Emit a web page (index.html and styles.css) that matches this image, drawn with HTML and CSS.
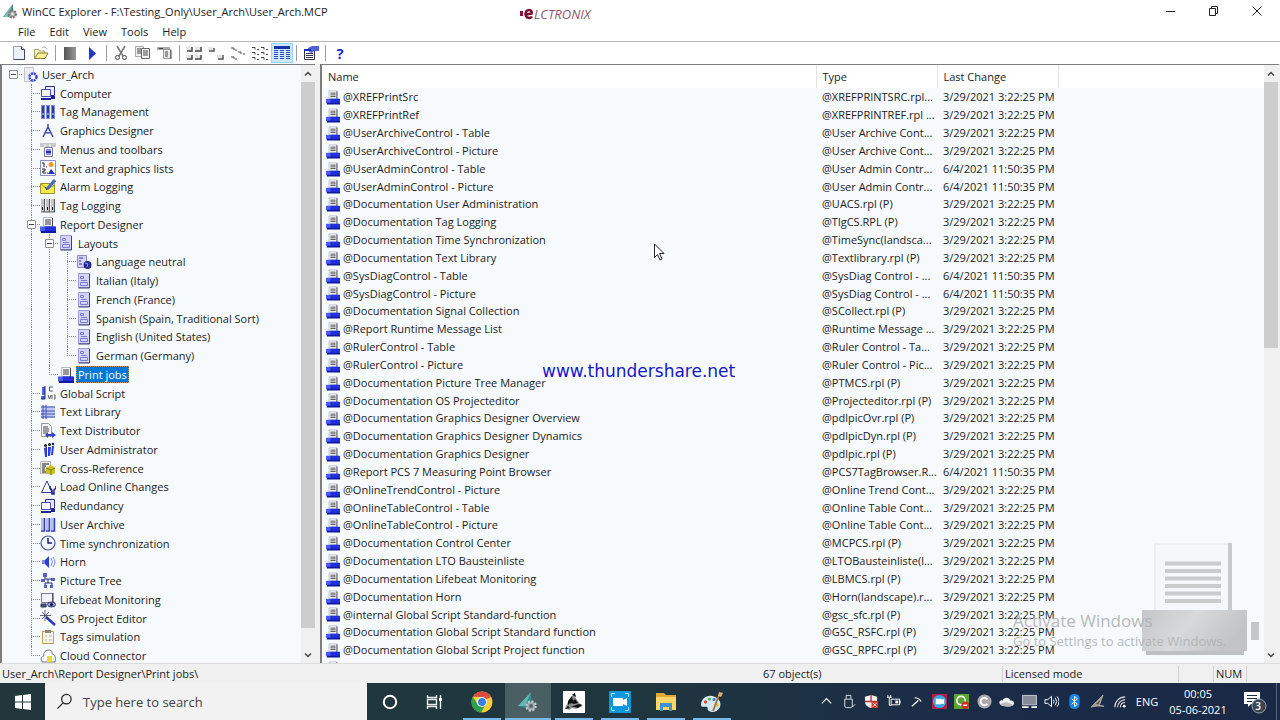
FILE: index.html
```html
<!DOCTYPE html>
<html lang="en">
<head>
<meta charset="utf-8">
<title>WinCC Explorer</title>
<link rel="stylesheet" href="styles.css">
</head>
<body>
<div class="app">
  <header class="titlebar">
    <svg class="icon" viewBox="0 0 16 16"><path d="M1 14 11 1v9l-4 4z" fill="#3f8f92"/><path d="M1 14 10 2 6 14z" fill="#78b9ba"/><circle cx="10.500" cy="11" r="3.500" fill="#a9a9a9" stroke="#777" stroke-width="2" stroke-dasharray="2 1"/><circle cx="10.500" cy="11" r="1.200" fill="#eee"/></svg>
    <h1 class="title">WinCC Explorer - F:\Testing_Only\User_Arch\User_Arch.MCP</h1>
    <div class="window-buttons">
      <button aria-label="Minimize"><svg viewBox="0 0 12 12"><path d="M1 6.500h9" stroke="#222" fill="none"/></svg></button>
      <button aria-label="Restore"><svg viewBox="0 0 12 12"><path d="M1.500 3.500h6v7h-6zM3.500 3.500v-2h6v7h-2" stroke="#222" fill="none"/></svg></button>
      <button aria-label="Close"><svg viewBox="0 0 12 12"><path d="M1.500 1.500l9 9M10.500 1.500l-9 9" stroke="#222" fill="none"/></svg></button>
    </div>
  </header>
  <div class="brand"><svg viewBox="0 0 14 14"><path d="M0 4h3v5H0z" fill="#8a1538"/><path d="M12 9.500c-1 2-5 2-6-.500-1-3 0-6 3-6 2.500 0 3 2 2.500 3.500L6 7.500" stroke="#7a1030" stroke-width="2.600" fill="none"/></svg><span>LCTRONIX</span></div>
  <nav class="menubar">
    <button>File</button><button>Edit</button><button>View</button><button>Tools</button><button>Help</button>
  </nav>
  <div class="toolbar" role="toolbar">
    <button aria-label="New"><svg class="icon" viewBox="0 0 16 16"><path d="M2.500 1.500h8l3 3v10h-11z" fill="#eef0fa" stroke="#9aa0b4"/><path d="M10.500 1.500v3h3v10h-11" fill="none" stroke="#3c4470"/></svg></button>
    <button aria-label="Open"><svg class="icon" viewBox="0 0 16 16"><path d="M1.500 13V4.500h4l1 1.500h5v2" fill="#fffbd0" stroke="#a8a060"/><path d="M1.500 13.500 5 8h10l-3 5.500z" fill="#f6ef9a" stroke="#857f3a"/><path d="M9 3c2-2 4-1 5 1" fill="none" stroke="#999"/></svg></button>
    <span class="rule"></span>
    <button aria-label="Stop"><svg class="icon" viewBox="0 0 16 16"><defs><linearGradient id="stop"><stop stop-color="#555"/><stop offset="1" stop-color="#999"/></linearGradient></defs><path d="M2 2h12v13H2z" fill="url(#stop)"/></svg></button>
    <button aria-label="Activate"><svg class="icon" viewBox="0 0 16 16"><path d="M5 2l7 6.500L5 15z" fill="#2136d8"/></svg></button>
    <span class="rule"></span>
    <button aria-label="Cut"><svg class="icon" viewBox="0 0 16 16"><path d="M4 1l6 10M12 1 6 11" stroke="#777" stroke-width="1.500"/><circle cx="4.500" cy="12.500" r="2" fill="none" stroke="#444"/><circle cx="11.500" cy="12.500" r="2" fill="none" stroke="#444"/></svg></button>
    <button aria-label="Copy"><svg class="icon" viewBox="0 0 16 16"><path d="M.5 1.500h8v10h-8z" fill="#eee" stroke="#aaa"/><path d="M6.500 3.500h8v10h-8z" fill="#f4f4f4" stroke="#666"/><path d="M2 4h4M2 6h4M2 8h4M8 6h5M8 8h5M8 10h5" stroke="#444"/></svg></button>
    <button aria-label="Paste"><svg class="icon" viewBox="0 0 16 16"><path d="M0 2h13v3H0z" fill="#aaa"/><path d="M6.500 4.500h7v9h-7z" fill="#eee" stroke="#999"/><path d="M2 3.500h4M8 7h3M8 9h3M8 11h3M14 5v9" stroke="#444"/></svg></button>
    <span class="rule"></span>
    <button aria-label="Large icons"><svg class="icon" viewBox="0 0 16 16"><path d="M1 6h5V2M9 6h6V2M1 14h5v-4M9 14h6v-4" fill="none" stroke="#444" stroke-width="1.500"/><path d="M0 2h5v3H0zM9 2h5v3H9zM0 10h5v3H0zM9 10h5v3H9z" fill="#e4e4e4"/></svg></button>
    <button aria-label="Small icons"><svg class="icon" viewBox="0 0 16 16"><path d="M1 6h5V3M10 14h5v-4" fill="none" stroke="#555" stroke-width="1.500"/><path d="M0 2h5v3H0zM9 10h5v3H9z" fill="#e4e4e4"/></svg></button>
    <button aria-label="Tiles"><svg class="icon" viewBox="0 0 16 16"><path d="M1 3h3v2M1 12h3v2M8 7h3v2M5 5h2M5 14h2M13 9h2" fill="none" stroke="#444"/></svg></button>
    <button aria-label="List"><svg class="icon" viewBox="0 0 16 16"><path d="M0 2.500h3v2M0 7.500h3v2M0 12.500h3v2M9 2.500h3v2M9 7.500h3v2M9 12.500h3v2M5 4.500h2M5 9.500h2M5 14.500h2M14 4.500h2M14 9.500h2M14 14.500h2" fill="none" stroke="#444"/></svg></button>
    <button aria-label="Details" class="pressed"><svg class="icon" viewBox="0 0 16 16"><path d="M0 1h16v3H0z" fill="#1731ad"/><path d="M0 5.500h4M0 7.500h4M0 9.500h4M0 11.500h4M0 13.500h4M6 5.500h4M6 7.500h4M6 9.500h4M6 11.500h4M6 13.500h4M12 5.500h4M12 7.500h4M12 9.500h4M12 11.500h4M12 13.500h4" stroke="#2f49c0"/></svg></button>
    <span class="rule"></span>
    <button aria-label="Properties"><svg class="icon" viewBox="0 0 16 16"><path d="M1.500 5.500h10v9h-10z" fill="#fff" stroke="#335"/><path d="M3 8.500h7M3 10.500h7M3 12.500h7" stroke="#335"/><path d="M5 3l4-2h7v5h-5l-2 2-3-1z" fill="#5261d8"/><path d="M1 5h7" stroke="#1731ad" stroke-width="2"/></svg></button>
    <span class="rule"></span>
    <button aria-label="Help" class="help">?</button>
  </div>
  <main class="panes">
    <section class="tree-pane" aria-label="Project tree">
      <ul class="tree" id="tree"></ul>
      <div class="scrollbar"><svg class="arrow" viewBox="0 0 14 14"><path d="M4 9l3-3 3 3" /></svg><div class="thumb long"></div><svg class="arrow" viewBox="0 0 14 14"><path d="M4 6l3 3 3-3"/></svg></div>
    </section>
    <section class="list-pane" aria-label="Print jobs">
      <div class="list">
        <table>
          <colgroup><col class="c-name"><col class="c-type"><col class="c-date"><col></colgroup>
          <thead><tr><th>Name</th><th>Type</th><th>Last Change</th><th></th></tr></thead>
          <tbody id="rows"></tbody>
        </table>
        <svg class="printer-mark" viewBox="0 0 118 114">
          <defs><linearGradient id="pm" x2="1" y2=".3"><stop stop-color="#bfc1c2"/><stop offset=".5" stop-color="#d4d6d7"/><stop offset="1" stop-color="#bcbebf"/></linearGradient></defs>
          <path d="M13 0h78v72H13z" fill="#edf0f2"/><path d="M87 0h4v70h-4z" fill="#c4c7c8"/><path d="M15 2h72v68H15z" fill="#f5f8fa"/>
          <path d="M24 20.500h56M24 28h56M24 35.500h56M24 43h56M24 50.500h56M24 58h56" stroke="#c5c8c9" stroke-width="4"/>
          <path d="M1 67h105v41H1z" fill="url(#pm)"/><path d="M5 108h98v4H5z" fill="#b9bbbc"/><path d="M110 79h8v18h-8z" fill="#bfc1c2"/>
        </svg>
      </div>
      <div class="scrollbar"><svg class="arrow" viewBox="0 0 14 14"><path d="M4 9l3-3 3 3"/></svg><div class="thumb short"></div><svg class="arrow end" viewBox="0 0 14 14"><path d="M4 6l3 3 3-3"/></svg></div>
    </section>
  </main>
  <footer class="status">
    <span class="s-path">User_Arch\Report Designer\Print jobs\</span>
    <span class="s-count">67 object(s)</span>
    <span class="s-mode">Licensed mode</span>
    <span class="s-blank"></span>
    <span class="s-num">NUM</span>
    <span class="s-end"></span>
  </footer>
  <div class="taskbar">
    <button class="start" aria-label="Start"><svg viewBox="0 0 16 16"><path d="M0 2l7-1v6.500H0zM8 1l8-1v7.500H8zM0 8.500h7V15l-7-1zM8 8.500h8V16l-8-1z" fill="#fff"/></svg></button>
    <label class="search"><svg viewBox="0 0 18 18"><circle cx="11" cy="6.500" r="5" fill="none" stroke="#222" stroke-width="1.300"/><path d="M7.500 10.500 1.500 16.500" stroke="#222" stroke-width="1.300"/></svg><input type="text" aria-label="Search" placeholder="Type here to search"></label>
    <div class="tasks">
      <button aria-label="Cortana"><svg viewBox="0 0 22 22"><circle cx="11" cy="11" r="6.200" fill="none" stroke="#fff" stroke-width="2"/></svg></button>
      <button aria-label="Task view"><svg viewBox="0 0 22 22"><path d="M2.500 4v2.500h9V4M2.500 18v-2.500h9V18M2.500 8.500h9v5h-9zM15.500 4v14" fill="none" stroke="#e8eef0" stroke-width="1.400"/><path d="M14 7h3v3h-3z" fill="#fff"/></svg></button>
      <button aria-label="Chrome" class="running"><svg viewBox="0 0 22 22"><circle cx="11" cy="11" r="10.500" fill="#f9cf33"/><path d="M1.900 5.700A10.500 10.500 0 0 1 20.100 5.700L11 6z" fill="#dd4b3e"/><path d="M1.900 5.700A10.500 10.500 0 0 0 10 21.500l5-8.500-8 1z" fill="#2fa04e"/><path d="M20.100 5.700H11v5z" fill="#dd4b3e"/><circle cx="11" cy="11" r="5" fill="#fff"/><circle cx="11" cy="11" r="4" fill="#3d7fe0"/></svg></button>
      <button aria-label="WinCC Explorer" class="running current"><svg viewBox="0 0 22 22"><path d="M1 15 14 1v12l-5 4z" fill="#2f8f8d"/><path d="M1 15 14 1 8 15z" fill="#6bb5b0"/><circle cx="14" cy="15" r="4.500" fill="#9ba3a6" stroke="#bfc6c8" stroke-width="2.500" stroke-dasharray="2 1.500"/><circle cx="14" cy="15" r="2" fill="#5c6a6e"/></svg></button>
      <button aria-label="Sketch" class="running"><svg viewBox="0 0 22 22"><rect width="22" height="22" fill="#fff"/><path d="M2 17l3-6 3-5 3-2 3 5 3 4 3 1-2 2-5 2-4-1-3 2z" fill="#8d8d8d"/><path d="M2 18l3-3 2 2zM5 10l4-5 1 5 2-2 3 4-4 1-3-1-3 2zM8 16l5-2 3-1 3 1-4 3-3-1zM9 4l3-2 1 4z" fill="#111"/></svg></button>
      <button aria-label="Recorder" class="running"><svg viewBox="0 0 22 22"><rect width="22" height="22" rx="1" fill="#0e97dc"/><path d="M2.500 6V2.500H6M16 2.500h3.500V6M2.500 16v3.500H6M16 19.500h3.500V16" stroke="#a5dcf8" fill="none"/><path d="M4 7h10v2l4-2v8l-4-2v2H4z" fill="#fff"/></svg></button>
      <button aria-label="File Explorer" class="running"><svg viewBox="0 0 22 22"><path d="M1 2h8l2 2h10v15H1z" fill="#e5a82f"/><path d="M1 6h20v13H1z" fill="#fbd667"/><path d="M5 20v-8h12v8h-3v-4H8v4z" fill="#3d93cf"/></svg></button>
      <button aria-label="Paint" class="running"><svg viewBox="0 0 22 22"><path d="M0 14C0 8 5 4 11 5s10 6 8 11-8 6-11 4 0-3-2-4-6 1-6-2z" fill="#d3e8f2"/><circle cx="4.500" cy="11" r="1.700" fill="#e04b3a"/><circle cx="8.500" cy="8" r="1.600" fill="#4eb34a"/><circle cx="13" cy="8.500" r="1.500" fill="#3b76d0"/><circle cx="16" cy="14" r="1.700" fill="#e9b93b"/><path d="M12 20 18 4" stroke="#b27435" stroke-width="2"/><path d="M17 5l1-4 4 1-2 4z" fill="#e0b070"/></svg></button>
    </div>
    <div class="tray">
      <svg viewBox="0 0 16 16"><path d="M3 10l5-5 5 5" stroke="#fff" stroke-width="1.300" fill="none"/></svg>
      <svg viewBox="0 0 16 16"><path d="M5.500 5V1.500h5V5M4 5.500h8V13q0 1.500-2 1.500H6q-2 0-2-1.500zM12 14l3-3" stroke="#e8e8e8" fill="none"/></svg>
      <svg viewBox="0 0 16 16"><path d="M7.500 1 14 3v5c0 4-3 6-6.500 7C4 14 1 12 1 8V3z" fill="#f2f2f2"/><path d="M7.500 1v7H1M7.500 8H14" stroke="#b33" stroke-width="1.500" fill="none"/><path d="M8 8h7v7H8z" fill="#d8362d"/><path d="M9.500 9.500l4 4M13.500 9.500l-4 4" stroke="#fff"/></svg>
      <svg viewBox="0 0 16 16"><path d="M5.500 5.500h9v6h-9zM15 7v3M1 3.500h5M2 1v3M5 1v3M3.500 4v8H6" stroke="#fff" fill="none"/><path d="M10 7h3v3h-3z" fill="#fff"/></svg>
      <svg viewBox="0 0 16 16"><path d="M3 13l7-6M6 4c2 0 5 1 7 4" stroke="#fff" stroke-width="1.300" fill="none"/></svg>
      <svg viewBox="0 0 16 16"><path d="M0 0h16v16H0z" fill="#b31d45"/><circle cx="8" cy="8" r="7" fill="#3aa4e0"/><path d="M4 5h6v1l3-1v6l-3-1v1H4z" fill="#fff"/></svg>
      <svg viewBox="0 0 16 16"><path d="M0 0h16v16H0z" fill="#5aa52f"/><circle cx="7.500" cy="7" r="4.500" fill="none" stroke="#fff" stroke-width="1.800"/><circle cx="12" cy="12" r="4" fill="#d32d27"/><path d="M10 12h4" stroke="#fff" stroke-width="1.500"/></svg>
      <svg viewBox="0 0 16 16"><circle cx="8" cy="8" r="7.500" fill="#aaa9ac"/><path d="M11 5.500a4 4 0 1 0 0 5" fill="none" stroke="#fff" stroke-width="2"/></svg>
      <svg viewBox="0 0 16 16"><path d="M1 11c-2-3 1-5 3-4 1-4 7-4 8 0 4-1 5 3 3 5-3 2-11 2-14-1z" fill="#f2f2f2"/><path d="M1 11c3-2 8-4 14 1-3 2-11 2-14-1z" fill="#bbb"/></svg>
      <svg viewBox="0 0 16 16"><path d="M.5 1.500h15v10H.5z" fill="#868b95" stroke="#c9ccd2"/><path d="M0 14h7M10 14h6" stroke="#fff" stroke-width="2"/></svg>
      <svg viewBox="0 0 16 16"><path d="M1 6h3l4-3.500v11L4 10H1zM10 6q1.500 2 0 4M12 4q3 4 0 8M14 2.500q4 5.500 0 11" stroke="#fff" fill="none"/></svg>
      <svg viewBox="0 0 16 16"><rect x="2.500" width="11" height="16" rx="5" fill="#1485e0"/><path d="M5 5l6 6-3 2.500v-11L11 5l-6 6" stroke="#fff" fill="none"/></svg>
      <svg viewBox="0 0 16 16"><path d="M1 14 14 1 10 12q4 1 5 1-8-1-14 1z" fill="#a5a29a" stroke="#a5a29a"/><path d="M6 11 11 6 9 11z" fill="#4b4f54"/></svg>
      <svg viewBox="0 0 16 16"><path d="M3 14C3 8 8 3 14 3M6 14c0-4 4-8 8-8M9 14c0-3 2-5 5-5" stroke="#ddd" fill="none" stroke-width="1.200"/><circle cx="13" cy="13" r="1.500" fill="#fff"/></svg>
    </div>
    <span class="lang">ENG</span>
    <div class="clock"><span>00:05</span><span>05-06-2021</span></div>
    <button class="notify" aria-label="Notifications"><svg viewBox="0 0 24 24"><path d="M1 2h16v12H8l-3 3v-3H1z" fill="#fff"/><path d="M4 5.500h10M4 8.500h10M4 11.500h5" stroke="#1c2d45"/><circle cx="16" cy="16" r="7" fill="#3b4552" stroke="#9aa2ad"/></svg><span class="badge">3</span></button>
  </div>
  <svg class="cursor" viewBox="0 0 12 18"><path d="M1.500 1v13.500l3-3 2.500 5.500 2-1-2.500-5.500H11z" fill="#fff" stroke="#222"/></svg>
  <div class="site-mark">www.thundershare.net</div>
  <div class="activate"><strong>Activate Windows</strong><span>Go to Settings to activate Windows.</span></div>
</div>
<script src="app.js"></script>
</body>
</html>
```
FILE: styles.css
```css
* { box-sizing: border-box; }
body { margin: 0; font-family: "Open Sans", "Noto Sans", sans-serif; font-size: 11px; color: #1c1c1c; overflow: hidden; }
button { border: 0; padding: 0; background: none; font: inherit; color: inherit; display: flex; align-items: center; justify-content: center; }
svg { display: block; flex: none; }
.icon { width: 16px; height: 16px; }
.app { position: relative; display: flex; flex-direction: column; height: 100vh; background: #fff; }

.titlebar { display: flex; align-items: center; height: 22px; padding: 0 2px; gap: 4px; }
.title { flex: 1; margin: 0; font-size: 11px; font-weight: 400; }
.window-buttons { display: flex; }
.window-buttons button { width: 43px; height: 20px; }
.window-buttons svg { width: 12px; height: 12px; }
.brand { position: absolute; left: 520px; top: 5px; display: flex; align-items: center; color: #8a5a6c; font: italic 13px/18px "Liberation Sans Narrow", "Open Sans", sans-serif; }
.brand svg { width: 14px; height: 14px; }

.menubar { display: flex; height: 20px; padding-left: 11px; border-bottom: 1px solid #b8b8b8; }
.menubar button { padding: 0 7px; }
.toolbar { display: flex; align-items: center; height: 22px; padding-left: 8px; }
.toolbar button { width: 22px; height: 20px; }
.toolbar .icon { width: 16px; height: 16px; }
.toolbar .rule { width: 1px; height: 16px; margin: 0 3px; background: #9c9c9c; }
.toolbar .pressed { background: #cce8ff; border: 1px solid #99d1ff; }
.toolbar .help { color: #1a30d0; font-size: 15px; font-weight: 700; }

.panes { flex: 1; min-height: 0; display: flex; gap: 5px; background: #f0f0f0; }
.tree-pane, .list-pane { display: flex; overflow: hidden; background: #f6fafc; border: 2px solid #7d7d7d; border-right: 0; border-bottom: 0; border-top-width: 1px; }
.tree-pane { width: 315px; }
.list-pane { flex: 1; min-width: 0; border-right: 2px solid #f0f0f0; }
.scrollbar { width: 14px; display: flex; flex-direction: column; background: #f0f0f0; }
.arrow { width: 14px; height: 17px; fill: none; stroke: #444; stroke-width: 1.500; }
.arrow.end { margin-top: auto; }
.thumb { background: #cdcdcd; }
.thumb.long { flex: 1; margin-bottom: 18px; }
.thumb.short { height: 266px; }

.tree { flex: 1; min-width: 0; margin: 0; padding: 0 0 0 2px; list-style: none; overflow: hidden; }
.tree li { display: flex; height: 19px; align-items: center; white-space: nowrap; }
.tree li:nth-child(4n + 2) { height: 18px; }
.slot { width: 18px; height: 100%; flex: none; position: relative; }
.slot.line::before, .slot.last::before { content: ""; position: absolute; left: 9px; top: 0; bottom: 0; border-left: 1px dotted #8c8c8c; }
.slot.last::before { bottom: 50%; }
.slot.elbow::after, .slot.last::after { content: ""; position: absolute; left: 9px; right: 0; top: 9px; border-top: 1px dotted #8c8c8c; }
.expander { position: absolute; z-index: 1; left: 5px; top: 5px; width: 9px; height: 9px; background: #fff; border: 1px solid #8f8f8f; border-radius: 1px; }
.expander::after { content: ""; width: 5px; height: 1px; background: #445; flex: none; }
.label { margin-left: 2px; padding: 0 2px; line-height: 17px; }
.label.selected { background: #0078d7; color: #fff; outline: 1px dotted #d08a3c; outline-offset: -1px; }

.list { flex: 1; min-width: 0; position: relative; overflow: hidden; }
table { width: 100%; table-layout: fixed; border-collapse: collapse; }
.c-name { width: 494px; }
.c-type, .c-date { width: 121px; }
th { height: 23px; padding: 0 6px 1px; background: #fff; border-right: 1px solid #e2e2e2; text-align: left; font-weight: 400; }
th:last-child { border-right: 0; }
td { height: 18px; padding: 0 0 0 6px; line-height: 16px; white-space: nowrap; overflow: hidden; }
tbody tr:nth-child(6n) td { height: 17px; }
tbody td:first-child { padding-left: 4px; }
.name { display: flex; align-items: center; gap: 3px; }
.name .icon { width: 14px; height: 15px; }
.printer-mark { position: absolute; right: 5px; bottom: 6px; width: 118px; height: 114px; opacity: .9; }

.status { display: flex; align-items: center; height: 20px; background: #f0f0f0; border-top: 1px solid #dcdcdc; }
.status span { height: 16px; line-height: 16px; padding-left: 2px; white-space: nowrap; }
.s-path { flex: 762; }
.s-count { flex: 240; }
.s-mode, .s-blank, .s-num, .s-end { border-left: 1px solid #d0d0d0; }
.s-mode { width: 176px; }
.s-blank { width: 35px; }
.s-num { width: 33px; }
.s-end { width: 34px; }

.taskbar { display: flex; height: 37px; color: #fff; background: linear-gradient(90deg, #21373c, #20363e 50%, #1a2c48 75%, #1a2946); }
.start { width: 45px; }
.start svg { width: 16px; height: 16px; }
.search { display: flex; align-items: center; flex: 0 1 322px; padding-left: 11px; gap: 10px; background: #f2f2f2; }
.search svg { width: 17px; height: 17px; }
.search input { flex: 1; min-width: 0; border: 0; padding: 0; background: none; font: 13px "Open Sans", sans-serif; outline: 0; }
.search input::placeholder { color: #444; opacity: 1; }
.tasks { display: flex; }
.tasks button { width: 46px; position: relative; }
.tasks svg { width: 22px; height: 22px; }
.tasks .running::after { content: ""; position: absolute; left: 4px; right: 4px; bottom: 0; height: 2px; background: #76b9ed; }
.tasks .current { background: #4a5f64; }
.tasks .current::after { left: 0; right: 0; }
.tray { margin-left: auto; width: 316px; display: grid; grid-template-columns: repeat(14, 1fr); place-items: center; }
.tray svg { width: 15px; height: 15px; }
.lang { width: 32px; align-self: center; text-align: center; }
.clock { width: 70px; display: flex; flex-direction: column; align-items: center; justify-content: center; line-height: 16px; }
.notify { width: 44px; position: relative; border-right: 1px solid #5a6779; margin-right: 3px; }
.notify svg { width: 24px; height: 24px; }
.badge { position: absolute; right: 15px; bottom: 7px; font-size: 10px; font-weight: 600; line-height: 14px; }

.cursor { position: absolute; left: 653px; top: 243px; width: 12px; height: 18px; }
.site-mark { position: absolute; left: 542px; top: 360px; color: #1418c4; font: 17px/22px "DejaVu Sans", sans-serif; }
.activate { position: absolute; right: 54px; bottom: 70px; display: flex; flex-direction: column; color: #b0b3b5; opacity: .9; }
.activate strong { font-size: 17px; line-height: 22px; font-weight: 400; }
.activate span { font-size: 13px; line-height: 18px; }
```
FILE: app.js
```javascript
const printer = '<path d="M3.500.5h9v9h-9z" fill="#fff" stroke="#b5b8c8"/><path d="M12.500 1v9" stroke="#445"/><path d="M5 3h6M5 5h6M5 7h6" stroke="#333"/><path d="M0 9.500h15v5H0z" fill="#4a5df0"/><path d="M5 9.500h11V15H5z" fill="#2230dc"/><path d="M1 14h15v2H1z" fill="#1018a0"/>';
const page = '<path d="M2.500.5h11v14h-11z" fill="#d4d5f6" stroke="#9a9cd4"/><path d="M13.500 1v14h-11" fill="none" stroke="#3c3f78"/><path d="M4.500 3.500h3v2h-3zM5 7.500h6M4.500 9.500h7v3h-7z" fill="none" stroke="#7a7dd0"/>';
const monitors = '<path d="M5.500 1.500h9v9h-9z" fill="#e8e9fa" stroke="#2b2f8c"/><path d="M1.500 4.500h9v7h-9z" fill="#f7f7ff" stroke="#4a4db0"/><path d="M1 13h10v2H1zM11 11h4v3h-4z" fill="#1d239c"/>';
const icons = {
  root: '<path d="M2.500.5h9v14h-9z" fill="#eee" stroke="#c4c4c4"/><circle cx="11" cy="10" r="3.500" fill="#fff" stroke="#3547d8" stroke-width="2.500" stroke-dasharray="2 .8"/>',
  computer: monitors,
  tags: '<path d="M1 1h4v14H1zM6 1h4v14H6zM11 1h4v14h-4z" fill="#7f8de0"/><path d="M3 2v7M8 2v7M13 2v7M3 11v3M8 11v3M13 11v3" stroke="#172078" stroke-width="1.500"/>',
  compass: '<path d="M8 1v3M8 4 3 14M8 4l5 10M5 9q3 2 6 0" fill="none" stroke="#3038a8" stroke-width="1.400"/>',
  menus: '<path d="M0 1h16v4H0z" fill="#c6c8cc"/><path d="M4.500 5.500h8v9h-8z" fill="#f4f4fc" stroke="#777a99"/><path d="M6 8h5M6 12h5" stroke="#2530b0"/><path d="M6 10h5" stroke="#2530b0" stroke-width="2"/><path d="M5 2v3M10 2v3" stroke="#fff"/>',
  lists: '<path d="M.5.5h15v15H.5z" fill="#f8f8ff" stroke="#8a90c8"/><path d="M2 3h2v4M2 9h3v2H3v2h3M6 7h1M7 13h1" fill="none" stroke="#222"/><circle cx="11" cy="4.500" r="2.500" fill="#e89b28"/><path d="M8 14l3-5 4 5z" fill="#2030b0"/>',
  alarm: '<path d="M.5 4.500h14v10H.5z" fill="#f4ec45" stroke="#99952c"/><path d="M1 5l6 5 8-4" fill="none" stroke="#99952c"/><path d="M7 10 15 1" stroke="#4a68c8" stroke-width="3"/><path d="M5 8l2 3" stroke="#223"/>',
  logging: '<path d="M1 1h3v13H1zM6 1h3v13H6zM11 1h3v13h-3z" fill="#c2c6ca"/><path d="M4.500 1v13M9.500 1v13M14.500 1v13M1 14h14" stroke="#555"/><path d="M2 9h1v3H2zM7 9h1v3H7zM12 9h1v3h-1z" fill="#111"/>',
  printer, page,
  neutral: '<path d="M1.500 1.500h9v12h-9z" fill="#d4d5f4" stroke="#8a8cc8"/><path d="M3 4h4M3 7h2M3 10h3" stroke="#3038a8"/><circle cx="11.500" cy="11" r="4" fill="#252a94"/><path d="M9 9l3 1-1 3" fill="none" stroke="#98a0e8"/>',
  script: '<path d="M2 2h3v8H2zM1 11h4v3H1z" fill="#5363d8"/><path d="M5 1v13H1" fill="none" stroke="#172078"/><path d="M13 2H9.500v4H13M8 10l1.500 4L11 10M12 10v4M14 10h1v4h-1" fill="none" stroke="#555"/>',
  library: '<path d="M1 2h14v12H1z" fill="#c4cbf0"/><path d="M1 3h14M1 7h14M1 10h14M1 13h14M3 1v14M6 1v14" stroke="#4355b8"/>',
  distributor: '<path d="M1.500.5h7l3 3v10h-10z" fill="#f4f4f4" stroke="#999"/><path d="M3 4h5M3 6h6M3 8h6M3 10h4" stroke="#444"/><path d="M5 12l3-3v2h4V9l4 3-4 3v-2H8v2z" fill="#3340d0"/>',
  users: '<path d="M4 6l3-1v10H5zM8 5h3l-1 9H8zM12 4h2l-1 9h-2z" fill="#2c3cd8"/><circle cx="5.500" cy="3.500" r="1.500" fill="#222"/><circle cx="9.500" cy="2.500" r="1.500" fill="#222"/><circle cx="13" cy="2" r="1.300" fill="#222"/>',
  cross: '<path d="M.5 1.500h10v12H.5z" fill="#eee" stroke="#bbb"/><path d="M2 4h7M2 6h4M2 8h3M2 10h3M2 12h4" stroke="#222"/><path d="M6 8l5-3 4 3v5l-4 2-5-2z" fill="#c8c419"/><path d="M6 8l5 2 4-2M11 10v5" fill="none" stroke="#76740f"/>',
  online: '<path d="M1.500 13.500 7 2l5 11.500z" fill="#fff" stroke="#3038a8"/><path d="M10 7v2l2 2v4h2v-4l2-2V7" fill="none" stroke="#172078" stroke-width="1.500"/>',
  redundancy: monitors,
  archive: '<path d="M1 1h3v12H1zM6 1h3v12H6zM11 1h3v12h-3z" fill="#b5bdf2"/><path d="M4.500 1v13H1M9.500 1v13H6M14.500 1v13H11" fill="none" stroke="#2f3fb8" stroke-width="1.500"/>',
  clock: '<circle cx="8" cy="8" r="7" fill="#f4f6ff" stroke="#4453a8" stroke-width="1.200"/><path d="M8 3v5h4" fill="none" stroke="#172078" stroke-width="1.500"/>',
  horn: '<path d="M2 6h3v4H2z" fill="#7a88e0"/><path d="M5 6l4-4v12l-4-4z" fill="#2c3cd8"/><path d="M11 4q3 4 0 8M13 3q4 5 0 10" fill="none" stroke="#7a88e0"/>',
  pictree: '<path d="M3 0h4v4H3zM1 6h4v3H1zM11 5h4v3h-4zM4 12h3v3H4zM10 12h3v3h-3z" fill="#5363c8"/><path d="M5 4v2h7M8 6v4H5v2M8 10h4v2" fill="none" stroke="#222b70"/>',
  lifebeat: '<path d="M1.500 1.500h11v9h-11z" fill="#f3f3fa" stroke="#777aa0"/><path d="M13 1v10M1 12h5v3H1z" stroke="#333" fill="#4453c8"/><ellipse cx="11.500" cy="12.500" rx="4" ry="2.500" fill="#9ba5f0" stroke="#222b70"/><circle cx="11.500" cy="12.500" r="1.500" fill="#111"/>',
  wand: '<path d="M6 7l9 8" stroke="#2433c0" stroke-width="2.500"/><path d="M5 0v11M0 5.500h11M2 2l7 7M9 2 2 9" stroke="#445" stroke-width=".8"/>',
  clipboard: '<path d="M2.500 2.500h11v12h-11z" fill="#fdf8ee" stroke="#c29b55"/><path d="M5 1h6v3H5z" fill="#8a8a80"/><path d="M5 7h2M9 7h3M5 11h2M9 11h3" stroke="#a9a9a9"/>',
  cloud: '<path d="M2 13c-2-3 0-5 2-5-1-4 2-6 5-6s3 2 3 4c3 0 4 3 3 8H2z" fill="#fafafa" stroke="#777"/><path d="M7 8h5v6H7z" fill="#e6dc3c"/>'
};
const svg = name => `<svg class="icon" viewBox="0 0 16 16">${icons[name]}</svg>`;

// Guides per row: "." blank, "|" line, "+" branch, "L" last branch, "-" open node, "r" root
const tree = [
  ["r", "root", "User_Arch"], [".+", "computer", "Computer"], [".+", "tags", "Tag Management"],
  [".+", "compass", "Graphics Designer"], [".+", "menus", "Menus and toolbars"],
  [".+", "lists", "Text and graphics lists"], [".+", "alarm", "Alarm Logging"],
  [".+", "logging", "Tag Logging"], [".-", "printer", "Report Designer"],
  [".|-", "page", "Layouts"], [".||+", "neutral", "Language neutral"],
  [".||+", "page", "Italian (Italy)"], [".||+", "page", "French (France)"],
  [".||+", "page", "Spanish (Spain, Traditional Sort)"], [".||+", "page", "English (United States)"],
  [".||L", "page", "German (Germany)"], [".|L", "printer", "Print jobs"],
  [".+", "script", "Global Script"], [".+", "library", "Text Library"],
  [".+", "distributor", "Text Distributor"], [".+", "users", "User Administrator"],
  [".+", "cross", "Cross-Reference"], [".+", "online", "Load Online Changes"],
  [".+", "redundancy", "Redundancy"], [".+", "archive", "User Archive"],
  [".+", "clock", "Time synchronization"], [".+", "horn", "Horn"],
  [".+", "pictree", "Picture Tree"], [".+", "lifebeat", "Lifebeat Monitoring"],
  [".+", "wand", "OS Project Editor"], [".+", "clipboard", "Tags simulation"],
  [".L", "cloud", "Cloud Connector"]
];
const slotClass = { ".": "", "|": "line", "+": "line elbow", "L": "last", "-": "line elbow", "r": "elbow" };
document.getElementById("tree").innerHTML = tree.map(([guides, icon, text]) => {
  const slots = [...guides].map(g => `<span class="slot ${slotClass[g]}">${"-r".includes(g) ? '<button class="expander" aria-label="Collapse"></button>' : ""}</span>`).join("");
  return `<li>${slots}${svg(icon)}<span class="label${text === "Print jobs" ? " selected" : ""}">${text}</span></li>`;
}).join("");

const march = "3/29/2021 3:22:25 PM", june = "6/4/2021 11:50:35 PM";
const jobs = [
  ["@XREFPrintSrc", "@XREFPRINTSRC.rpl..."], ["@XREFPrintRef", "@XREFPRINTREF.rpl ..."],
  ["@UserArchiveControl - Table", "@User Archive Cont..."], ["@UserArchiveControl - Picture", "@User Archive Cont..."],
  ["@UserAdminControl - Table", "@User Admin Contr...", june], ["@UserAdminControl - Picture", "@User Admin Contr...", june],
  ["@Documentation User Administration", "@UACS.rpl (P)"], ["@Documentation Tag Logging", "@TlgCS.RPL (P)"],
  ["@Documentation Time Synchronization", "@TimeSync(landsca..."], ["@Documentation Text Library", "@Textlibrary.rpl (P)"],
  ["@SysDiagControl - Table", "@SysDiag Control - ...", june], ["@SysDiagControl - Picture", "@SysDiag Control - ...", june],
  ["@Documentation Signal Collection", "@SCollect.rpl (P)"], ["@Report Runtime Message List", "@Runtime Message ..."],
  ["@RulerControl - Table", "@Ruler Control - Ta..."], ["@RulerControl - Picture", "@Ruler Control - Pic..."],
  ["@Documentation Picture Tree Manager", "@PTMCS.rpl (P)"], ["@Documentation OS Projecteditor", "@Projecteditor.rpl (P)"],
  ["@Documentation Graphics Designer Overview", "@pdlpicOvr.rpl (P)"], ["@Documentation Graphics Designer Dynamics", "@pdlpicDyn.rpl (P)"],
  ["@Documentation Graphics Designer", "@pdlpic.rpl (P)"], ["@Report PCS 7 Measuring Point Browser", "@PCS7TagBrowser.R...", june],
  ["@OnlineTrendControl - Picture", "@Online Trend Cont..."], ["@OnlineTableControl - Table", "@Online Table Cont..."],
  ["@OnlineTableControl - Picture", "@Online Table Cont..."], ["@Documentation Control Center", "@MCPCS.rpl (P)"],
  ["@Documentation LTO Bausteinliste", "@LTOBausteinliste(l..."], ["@Documentation Lifebeat Monitoring", "@LBMCS.rpl (P)"],
  ["@Documentation Horn", "@Horn(landscape).r..."], ["@internal Global Script Standard-function", "@gsc_sfc.rpl (P)"],
  ["@Documentation Global Script Standard function", "@GSC_RSFC.rpl (P)"], ["@Documentation Global Script Project function", "@GSC_RPFC.rpl (P)"],
  ["", "", ""]
];
document.getElementById("rows").innerHTML = jobs.map(([name, type, date = march]) =>
  `<tr><td><div class="name">${svg("printer")}<span>${name}</span></div></td><td>${type}</td><td>${date}</td><td></td></tr>`).join("");
```
